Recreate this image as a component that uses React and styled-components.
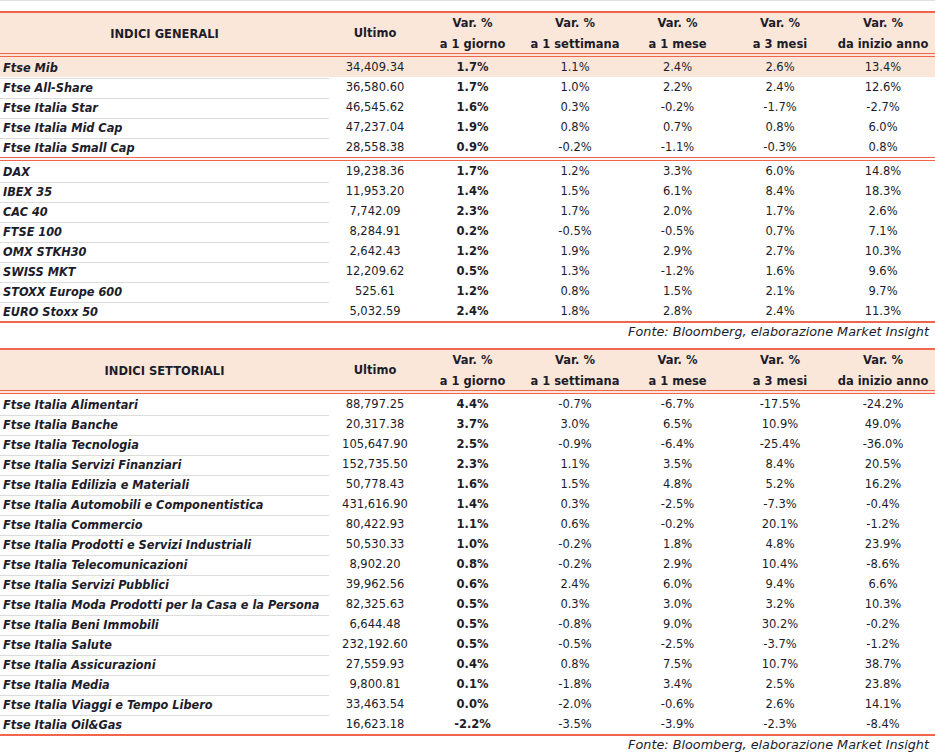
import React from 'react';
import styled, { createGlobalStyle } from 'styled-components';

const CORAL = '#f2654d';
const PEACH = '#fbe7d9';
const INK = '#1c1c2a';

const GlobalStyle = createGlobalStyle`
  body {
    margin: 0;
    background: #fff;
    font-family: "DejaVu Sans", Verdana, sans-serif;
    color: ${INK};
  }
`;

const COLS = '329px 92px 103px 102px 103px 102px 104px';

const Page = styled.div`
  width: 935px;
  border-top: 1px solid #e2e2e2;
  padding-top: 9.5px;
`;

const Table = styled.section`
  border-top: 2px solid ${CORAL};
  border-bottom: 2px solid ${CORAL};
`;

const HeadRow = styled.div`
  display: grid;
  grid-template-columns: ${COLS};
  height: 40px;
  background: ${PEACH};
  border-bottom: 4.5px double ${CORAL};
`;

const HeadCell = styled.div`
  display: flex;
  flex-direction: column;
  justify-content: center;
  align-items: center;
  font-size: 11.5px;
  font-weight: 700;
  line-height: 21px;
  white-space: nowrap;
  text-transform: ${(p) => (p.$upper ? 'uppercase' : 'none')};
  padding-top: ${(p) => (p.$upper ? '2px' : '0')};
`;

const Group = styled.div`
  & + & {
    border-top: 4px double ${CORAL};
  }
`;

const Row = styled.div`
  display: grid;
  grid-template-columns: ${COLS};
  height: 20px;
  background: ${(p) => (p.$highlight ? PEACH : 'transparent')};
`;

const NameCell = styled.div`
  padding-left: 3px;
  font-family: "DejaVu Sans Condensed", "DejaVu Sans", sans-serif;
  font-size: 12.6px;
  font-weight: 700;
  font-style: italic;
  line-height: 21px;
  border-bottom: 1px solid ${(p) => (p.$last ? 'transparent' : '#dcdcdc')};
  white-space: nowrap;
`;

const ValueCell = styled.div`
  text-align: center;
  font-size: 11.5px;
  line-height: 21px;
  font-weight: ${(p) => (p.$bold ? 700 : 400)};
`;

const Source = styled.div`
  text-align: right;
  padding-right: 6px;
  font-size: 12.8px;
  font-style: italic;
  line-height: 17px;
  white-space: nowrap;
  height: ${(p) => p.$height}px;
`;

const general = [
  [
    ['Ftse Mib', '34,409.34', '1.7%', '1.1%', '2.4%', '2.6%', '13.4%'],
    ['Ftse All-Share', '36,580.60', '1.7%', '1.0%', '2.2%', '2.4%', '12.6%'],
    ['Ftse Italia Star', '46,545.62', '1.6%', '0.3%', '-0.2%', '-1.7%', '-2.7%'],
    ['Ftse Italia Mid Cap', '47,237.04', '1.9%', '0.8%', '0.7%', '0.8%', '6.0%'],
    ['Ftse Italia Small Cap', '28,558.38', '0.9%', '-0.2%', '-1.1%', '-0.3%', '0.8%'],
  ],
  [
    ['DAX', '19,238.36', '1.7%', '1.2%', '3.3%', '6.0%', '14.8%'],
    ['IBEX 35', '11,953.20', '1.4%', '1.5%', '6.1%', '8.4%', '18.3%'],
    ['CAC 40', '7,742.09', '2.3%', '1.7%', '2.0%', '1.7%', '2.6%'],
    ['FTSE 100', '8,284.91', '0.2%', '-0.5%', '-0.5%', '0.7%', '7.1%'],
    ['OMX STKH30', '2,642.43', '1.2%', '1.9%', '2.9%', '2.7%', '10.3%'],
    ['SWISS MKT', '12,209.62', '0.5%', '1.3%', '-1.2%', '1.6%', '9.6%'],
    ['STOXX Europe 600', '525.61', '1.2%', '0.8%', '1.5%', '2.1%', '9.7%'],
    ['EURO Stoxx 50', '5,032.59', '2.4%', '1.8%', '2.8%', '2.4%', '11.3%'],
  ],
];

const sectors = [
  [
    ['Ftse Italia Alimentari', '88,797.25', '4.4%', '-0.7%', '-6.7%', '-17.5%', '-24.2%'],
    ['Ftse Italia Banche', '20,317.38', '3.7%', '3.0%', '6.5%', '10.9%', '49.0%'],
    ['Ftse Italia Tecnologia', '105,647.90', '2.5%', '-0.9%', '-6.4%', '-25.4%', '-36.0%'],
    ['Ftse Italia Servizi Finanziari', '152,735.50', '2.3%', '1.1%', '3.5%', '8.4%', '20.5%'],
    ['Ftse Italia Edilizia e Materiali', '50,778.43', '1.6%', '1.5%', '4.8%', '5.2%', '16.2%'],
    ['Ftse Italia Automobili e Componentistica', '431,616.90', '1.4%', '0.3%', '-2.5%', '-7.3%', '-0.4%'],
    ['Ftse Italia Commercio', '80,422.93', '1.1%', '0.6%', '-0.2%', '20.1%', '-1.2%'],
    ['Ftse Italia Prodotti e Servizi Industriali', '50,530.33', '1.0%', '-0.2%', '1.8%', '4.8%', '23.9%'],
    ['Ftse Italia Telecomunicazioni', '8,902.20', '0.8%', '-0.2%', '2.9%', '10.4%', '-8.6%'],
    ['Ftse Italia Servizi Pubblici', '39,962.56', '0.6%', '2.4%', '6.0%', '9.4%', '6.6%'],
    ['Ftse Italia Moda Prodotti per la Casa e la Persona', '82,325.63', '0.5%', '0.3%', '3.0%', '3.2%', '10.3%'],
    ['Ftse Italia Beni Immobili', '6,644.48', '0.5%', '-0.8%', '9.0%', '30.2%', '-0.2%'],
    ['Ftse Italia Salute', '232,192.60', '0.5%', '-0.5%', '-2.5%', '-3.7%', '-1.2%'],
    ['Ftse Italia Assicurazioni', '27,559.93', '0.4%', '0.8%', '7.5%', '10.7%', '38.7%'],
    ['Ftse Italia Media', '9,800.81', '0.1%', '-1.8%', '3.4%', '2.5%', '23.8%'],
    ['Ftse Italia Viaggi e Tempo Libero', '33,463.54', '0.0%', '-2.0%', '-0.6%', '2.6%', '14.1%'],
    ['Ftse Italia Oil&Gas', '16,623.18', '-2.2%', '-3.5%', '-3.9%', '-2.3%', '-8.4%'],
  ],
];

const periods = ['a 1 giorno', 'a 1 settimana', 'a 1 mese', 'a 3 mesi', 'da inizio anno'];

function IndexTable({ title, groups }) {
  return (
    <Table>
      <HeadRow>
        <HeadCell $upper>{title}</HeadCell>
        <HeadCell>Ultimo</HeadCell>
        {periods.map((p) => (
          <HeadCell key={p}>
            <span>Var. %</span>
            <span>{p}</span>
          </HeadCell>
        ))}
      </HeadRow>
      {groups.map((rows, gi) => (
        <Group key={gi}>
          {rows.map(([name, last, ...vars], i) => (
            <Row key={name} $highlight={name === 'Ftse Mib'}>
              <NameCell $last={i === rows.length - 1}>{name}</NameCell>
              <ValueCell>{last}</ValueCell>
              {vars.map((v, k) => (
                <ValueCell key={k} $bold={k === 0}>{v}</ValueCell>
              ))}
            </Row>
          ))}
        </Group>
      ))}
    </Table>
  );
}

export default function App() {
  return (
    <Page>
      <GlobalStyle />
      <IndexTable title="Indici generali" groups={general} />
      <Source $height={25}>Fonte: Bloomberg, elaborazione Market Insight</Source>
      <IndexTable title="Indici settoriali" groups={sectors} />
      <Source $height={20}>Fonte: Bloomberg, elaborazione Market Insight</Source>
    </Page>
  );
}
